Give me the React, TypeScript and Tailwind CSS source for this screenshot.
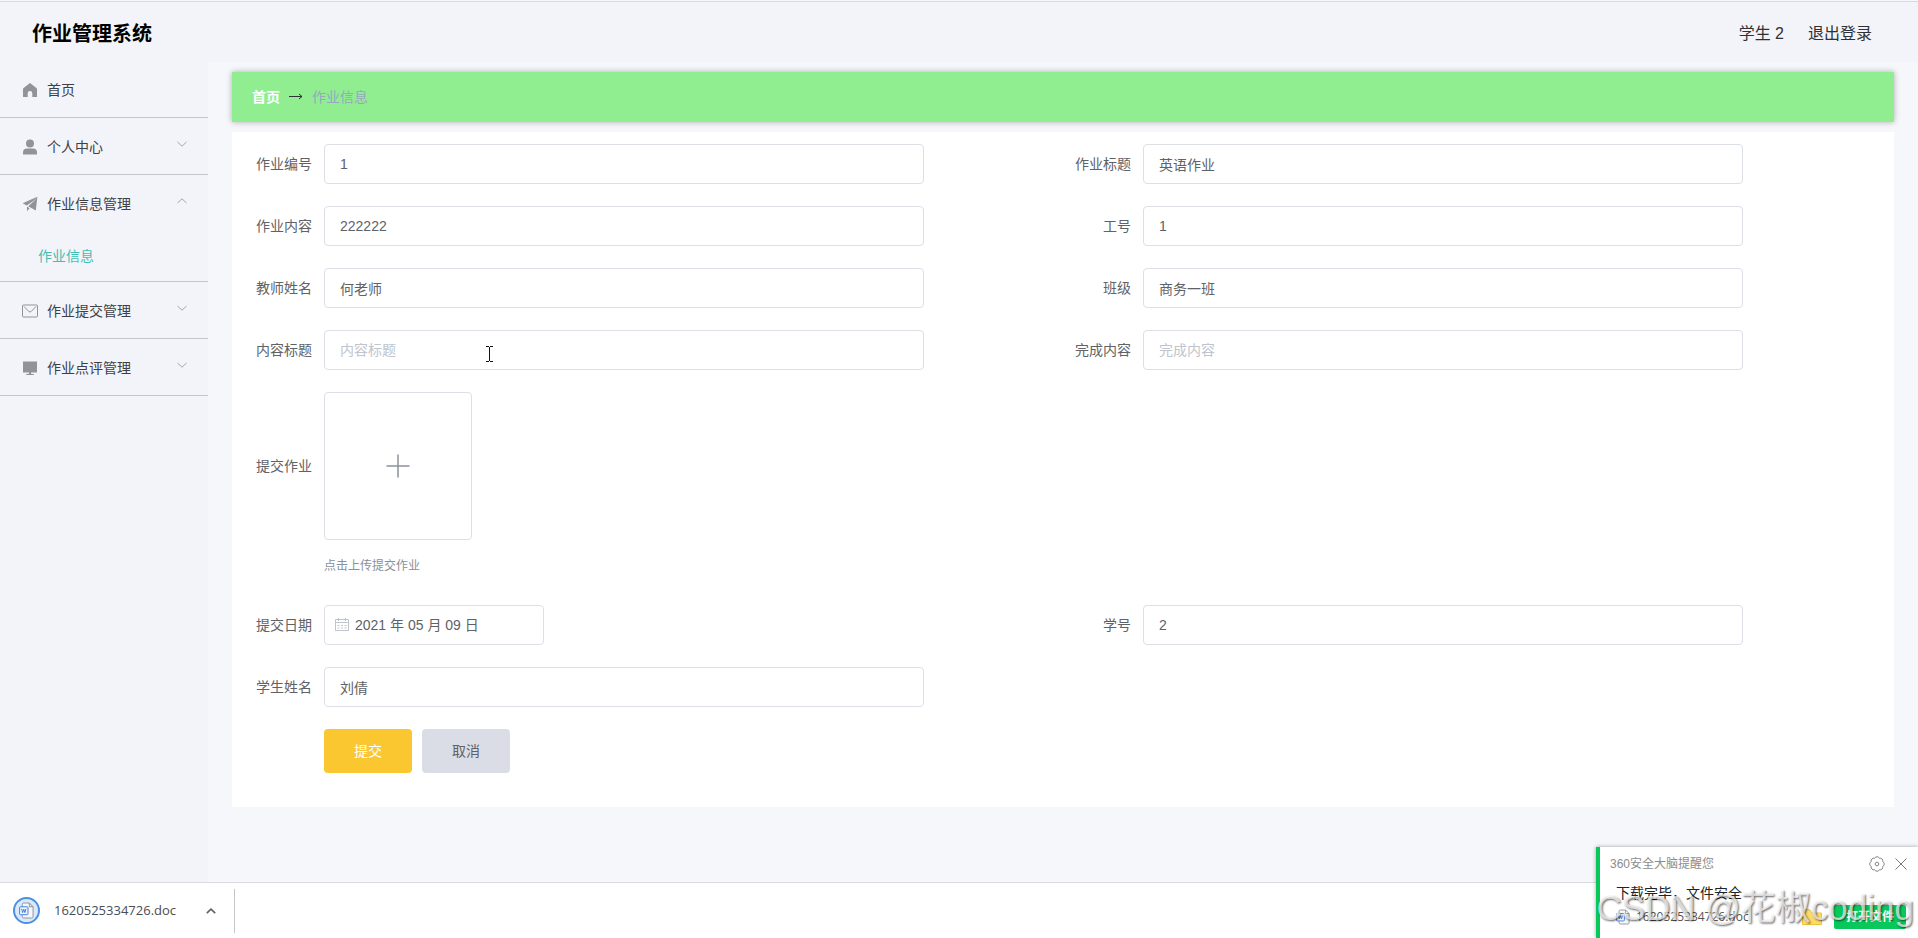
import type { ReactNode } from "react";

const iconClass = "h-4 w-4 shrink-0";

function HomeIcon() {
  return (
    <svg viewBox="0 0 16 16" className={iconClass} fill="#909399">
      <path d="M8 1 14.400 6c.4.3.6.7.6 1.200V15H10.300V11.300a2.300 2.300 0 0 0-4.600 0V15H1V7.200C1 6.700 1.200 6.300 1.600 6Z" />
    </svg>
  );
}

function UserIcon() {
  return (
    <svg viewBox="0 0 16 16" className={iconClass} fill="#909399">
      <circle cx="8" cy="4.500" r="4" />
      <path d="M1 15.500v-2a4 4 0 0 1 4-4h6a4 4 0 0 1 4 4v2Z" />
    </svg>
  );
}

function SendIcon() {
  return (
    <svg viewBox="0 0 16 16" className={iconClass} fill="#909399">
      <path d="M15.400.8.6 7.200l4.200 2.200L12 4.400ZM15.400.8 13.800 14.600 6.200 10.200l6.400-5.600ZM5 10.600v4.600l2.600-3Z" />
    </svg>
  );
}

function MailIcon() {
  return (
    <svg viewBox="0 0 16 16" className={iconClass} fill="none" stroke="#909399">
      <rect x=".5" y="2" width="15" height="12" rx=".8" />
      <path d="M2 3.500 6.800 8.500q1.200 1 2.400 0L14 3.500" />
    </svg>
  );
}

function ScreenIcon() {
  return (
    <svg viewBox="0 0 16 16" className={iconClass} fill="#909399">
      <path d="M1 1.500h14v11H1ZM7 12.500h2v1.200l3 .5v.8H4v-.8l3-.5Z" />
    </svg>
  );
}

function Chevron({ up = false }: { up?: boolean }) {
  return (
    <svg viewBox="0 0 12 12" className="mb-1.5 ml-auto h-3 w-3" fill="none" stroke="#a3a6ac">
      <path d={up ? "M1.500 8 6 3.800 10.500 8" : "M1.500 4 6 8.200 10.500 4"} />
    </svg>
  );
}

function DocIcon({ className }: { className: string }) {
  return (
    <svg viewBox="0 0 16 18" className={className} fill="none">
      <path
        d="M3.500 4V2.500A1.500 1.500 0 0 1 5 1h6l4 4v10.500a1.500 1.500 0 0 1-1.500 1.500H5a1.500 1.500 0 0 1-1.500-1.500V4M11 1v4h4"
        stroke="#8b9096"
        fill="#f5f7fa"
      />
      <rect x=".6" y="5" width="9" height="8.500" rx="1" fill="#eaf2fd" stroke="#3f7edb" />
      <path d="m2.800 7.200 1.100 4 1.200-3.500 1.200 3.500 1.100-4" stroke="#3f7edb" />
    </svg>
  );
}

type MenuItemProps = {
  icon: ReactNode;
  label: string;
  arrow?: "up" | "down";
  children?: ReactNode;
};

function MenuItem({ icon, label, arrow, children }: MenuItemProps) {
  return (
    <li className="border-b border-[#c3c5cb]">
      <button
        type="button"
        className="flex h-14 w-full items-center pt-0.5 pr-5 pl-[22px] text-left text-[#3d4046]"
      >
        {icon}
        <span className="ml-[9px]">{label}</span>
        {arrow && <Chevron up={arrow === "up"} />}
      </button>
      {children}
    </li>
  );
}

type FieldProps = {
  id: string;
  label: string;
  value?: string;
  placeholder?: string;
};

function Field({ id, label, value, placeholder }: FieldProps) {
  return (
    <div className="flex">
      <label htmlFor={id} className="w-20 shrink-0 pr-3 text-right leading-10">
        {label}
      </label>
      <input
        id={id}
        type="text"
        defaultValue={value}
        placeholder={placeholder}
        className="h-10 w-full max-w-[600px] rounded border border-[#dcdfe6] bg-white px-[15px] text-[#606266] outline-none placeholder:text-[#c0c4cc]"
      />
    </div>
  );
}

export default function App() {
  return (
    <div className="relative flex min-h-screen flex-col overflow-hidden bg-[#f5f7fb] pt-px font-['Liberation_Sans','Noto_Sans_CJK_SC',sans-serif] text-sm text-[#606266]">
      <header className="flex h-[61px] items-center justify-between border-t border-[#d6d9df] bg-[#f2f4f9] pr-[46px] pl-8 text-[#303133]">
        <h1 className="mt-1 text-xl font-bold text-black">作业管理系统</h1>
        <div className="mt-1 flex gap-6 text-base">
          <span>学生 2</span>
          <a href="#logout">退出登录</a>
        </div>
      </header>

      <div className="flex flex-1">
        <nav className="-mt-px w-52 shrink-0 bg-[#f2f4f9]">
          <ul>
            <MenuItem icon={<HomeIcon />} label="首页" />
            <MenuItem icon={<UserIcon />} label="个人中心" arrow="down" />
            <MenuItem icon={<SendIcon />} label="作业信息管理" arrow="up">
              <a href="#homework" className="block h-[50px] pl-[38px] leading-[50px] text-[#42bfb3]">
                作业信息
              </a>
            </MenuItem>
            <MenuItem icon={<MailIcon />} label="作业提交管理" arrow="down" />
            <MenuItem icon={<ScreenIcon />} label="作业点评管理" arrow="down" />
          </ul>
        </nav>

        <main className="min-w-0 flex-1 px-6 pt-[10px]">
          <div className="flex h-[50px] items-center bg-[#90ee90] pl-5 shadow-[0_0_6px_rgba(0,0,0,0.3)]">
            <a href="#home" className="font-bold text-white">
              首页
            </a>
            <svg viewBox="0 0 14 8" className="mx-[9px] h-2 w-[14px]" fill="none" stroke="#303133">
              <path d="M0 3.500h13M10 1l3 2.500L10 6" />
            </svg>
            <span className="text-[#97a8be]">作业信息</span>
          </div>

          <form className="mt-[10px] bg-white px-3 pt-3 pb-[34px]">
            <div className="grid grid-cols-2 gap-y-[22px]">
              <Field id="code" label="作业编号" value="1" />
              <Field id="title" label="作业标题" value="英语作业" />
              <Field id="content" label="作业内容" value="222222" />
              <Field id="staff" label="工号" value="1" />
              <Field id="teacher" label="教师姓名" value="何老师" />
              <Field id="class" label="班级" value="商务一班" />
              <Field id="contentTitle" label="内容标题" placeholder="内容标题" />
              <Field id="done" label="完成内容" placeholder="完成内容" />

              <div className="col-span-2 flex">
                <label htmlFor="upload" className="w-20 shrink-0 pr-3 text-right leading-[148px]">
                  提交作业
                </label>
                <div>
                  <button
                    id="upload"
                    type="button"
                    className="flex h-[148px] w-[148px] items-center justify-center rounded border border-[#dcdfe6]"
                  >
                    <svg viewBox="0 0 24 24" className="h-6 w-6" stroke="#8c939d" strokeWidth="1.5">
                      <path d="M12 .5v23M.5 12h23" />
                    </svg>
                  </button>
                  <p className="pt-4 pb-[7px] text-xs leading-5 text-[#889099]">点击上传提交作业</p>
                </div>
              </div>

              <div className="flex">
                <label htmlFor="date" className="w-20 shrink-0 pr-3 text-right leading-10">
                  提交日期
                </label>
                <div className="flex h-10 w-[220px] items-center rounded border border-[#dcdfe6] pl-[10px]">
                  <svg viewBox="0 0 14 14" className="h-[14px] w-[14px] shrink-0" fill="none" stroke="#c0c4cc">
                    <path d="M.5 1.500h13v11H.5ZM.5 4.500h13M3.500 0v3M10.500 0v3M2.500 7.500h2M6 7.500h2M9.500 7.500h2M2.500 10h2M6 10h2M9.500 10h2" />
                  </svg>
                  <input
                    id="date"
                    type="text"
                    defaultValue="2021 年 05 月 09 日"
                    className="min-w-0 flex-1 pl-[6px] outline-none"
                  />
                </div>
              </div>
              <Field id="studentNo" label="学号" value="2" />
              <div className="col-span-2 grid grid-cols-2">
                <Field id="studentName" label="学生姓名" value="刘倩" />
              </div>
            </div>

            <div className="mt-[22px] flex gap-[10px] pl-20">
              <button type="button" className="h-11 w-[88px] rounded bg-[#fbc730] text-white">
                提交
              </button>
              <button type="button" className="h-11 w-[88px] rounded bg-[#dadde5]">
                取消
              </button>
            </div>
          </form>
        </main>
      </div>

      <footer className="flex h-14 items-center border-t border-[#d8dadf] bg-white pl-[13px] font-['Open_Sans',sans-serif] text-[13px] text-[#4a4d52]">
        <div className="flex h-[27px] w-[27px] items-center justify-center rounded-full border-2 border-[#4a90e2] bg-[#dbe8fa]">
          <DocIcon className="h-[17px] w-[15px]" />
        </div>
        <span className="ml-[14px] w-[126px]">1620525334726.doc</span>
        <button type="button" aria-label="更多" className="ml-[26px]">
          <svg viewBox="0 0 10 6" className="h-[6px] w-[10px]" fill="none" stroke="#5f6368" strokeWidth="1.6">
            <path d="m.8 5.200 4.200-4 4.200 4" />
          </svg>
        </button>
        <span className="ml-[18px] h-11 w-px bg-[#c4c6ca]" />
      </footer>

      {/* 下载提醒 */}
      <aside className="absolute right-0 bottom-0 h-[91px] w-[322px] border-l-4 border-[#07c95b] bg-white pl-[10px] shadow-[0_0_4px_rgba(0,0,0,0.35)]">
        <div className="flex h-[34px] items-center pr-[11px] text-xs text-[#8c8c8c]">
          <span>360安全大脑提醒您</span>
          <button type="button" aria-label="设置" className="ml-auto">
            <svg viewBox="0 0 16 16" className="h-4 w-4" fill="none" stroke="#888">
              <path d="M13.700 10.400A2.600 2.600 0 0 1 10.400 13.700A2.600 2.600 0 0 1 5.600 13.700A2.600 2.600 0 0 1 2.300 10.400A2.600 2.600 0 0 1 2.300 5.600A2.600 2.600 0 0 1 5.600 2.300A2.600 2.600 0 0 1 10.400 2.300A2.600 2.600 0 0 1 13.700 5.600A2.600 2.600 0 0 1 13.700 10.400Z" />
              <circle cx="8" cy="8" r="1.800" />
            </svg>
          </button>
          <button type="button" aria-label="关闭" className="ml-[10px]">
            <svg viewBox="0 0 12 12" className="h-3 w-3" stroke="#777">
              <path d="m.5.5 11 11m0-11-11 11" />
            </svg>
          </button>
        </div>
        <p className="pl-[6px] leading-6 text-[#222]">下载完毕，文件安全</p>
        <div className="flex items-center pr-3 pl-[6px]">
          <DocIcon className="h-4 w-[14px]" />
          <span className="ml-[6px] font-['Open_Sans',sans-serif] text-xs text-[#555]">1620525334726.doc</span>
          <svg viewBox="0 0 20 16" className="ml-auto h-4 w-5" fill="#ffdb66" stroke="#ecc23e">
            <path d="M.5 15.500V2.500l2-2h5l2.500 3.500h9.500v11.500Z" />
          </svg>
          <button type="button" className="ml-3 h-6 w-[72px] rounded-xs bg-[#07c95b] text-xs font-bold text-white">
            打开文件
          </button>
        </div>
      </aside>

      <p className="pointer-events-none absolute right-1 bottom-[6px] text-[35px] leading-12 whitespace-nowrap text-white/70 [text-shadow:1px_1px_2px_rgba(0,0,0,0.6)]">
        CSDN @花椒coding
      </p>

      <svg viewBox="0 0 7 16" className="pointer-events-none absolute top-[346px] left-[486px] h-4 w-[7px]" fill="none" stroke="#111">
        <path d="M0 .5h3M4 .5h3M3.500 1v14M0 15.500h3M4 15.500h3" />
      </svg>
    </div>
  );
}
